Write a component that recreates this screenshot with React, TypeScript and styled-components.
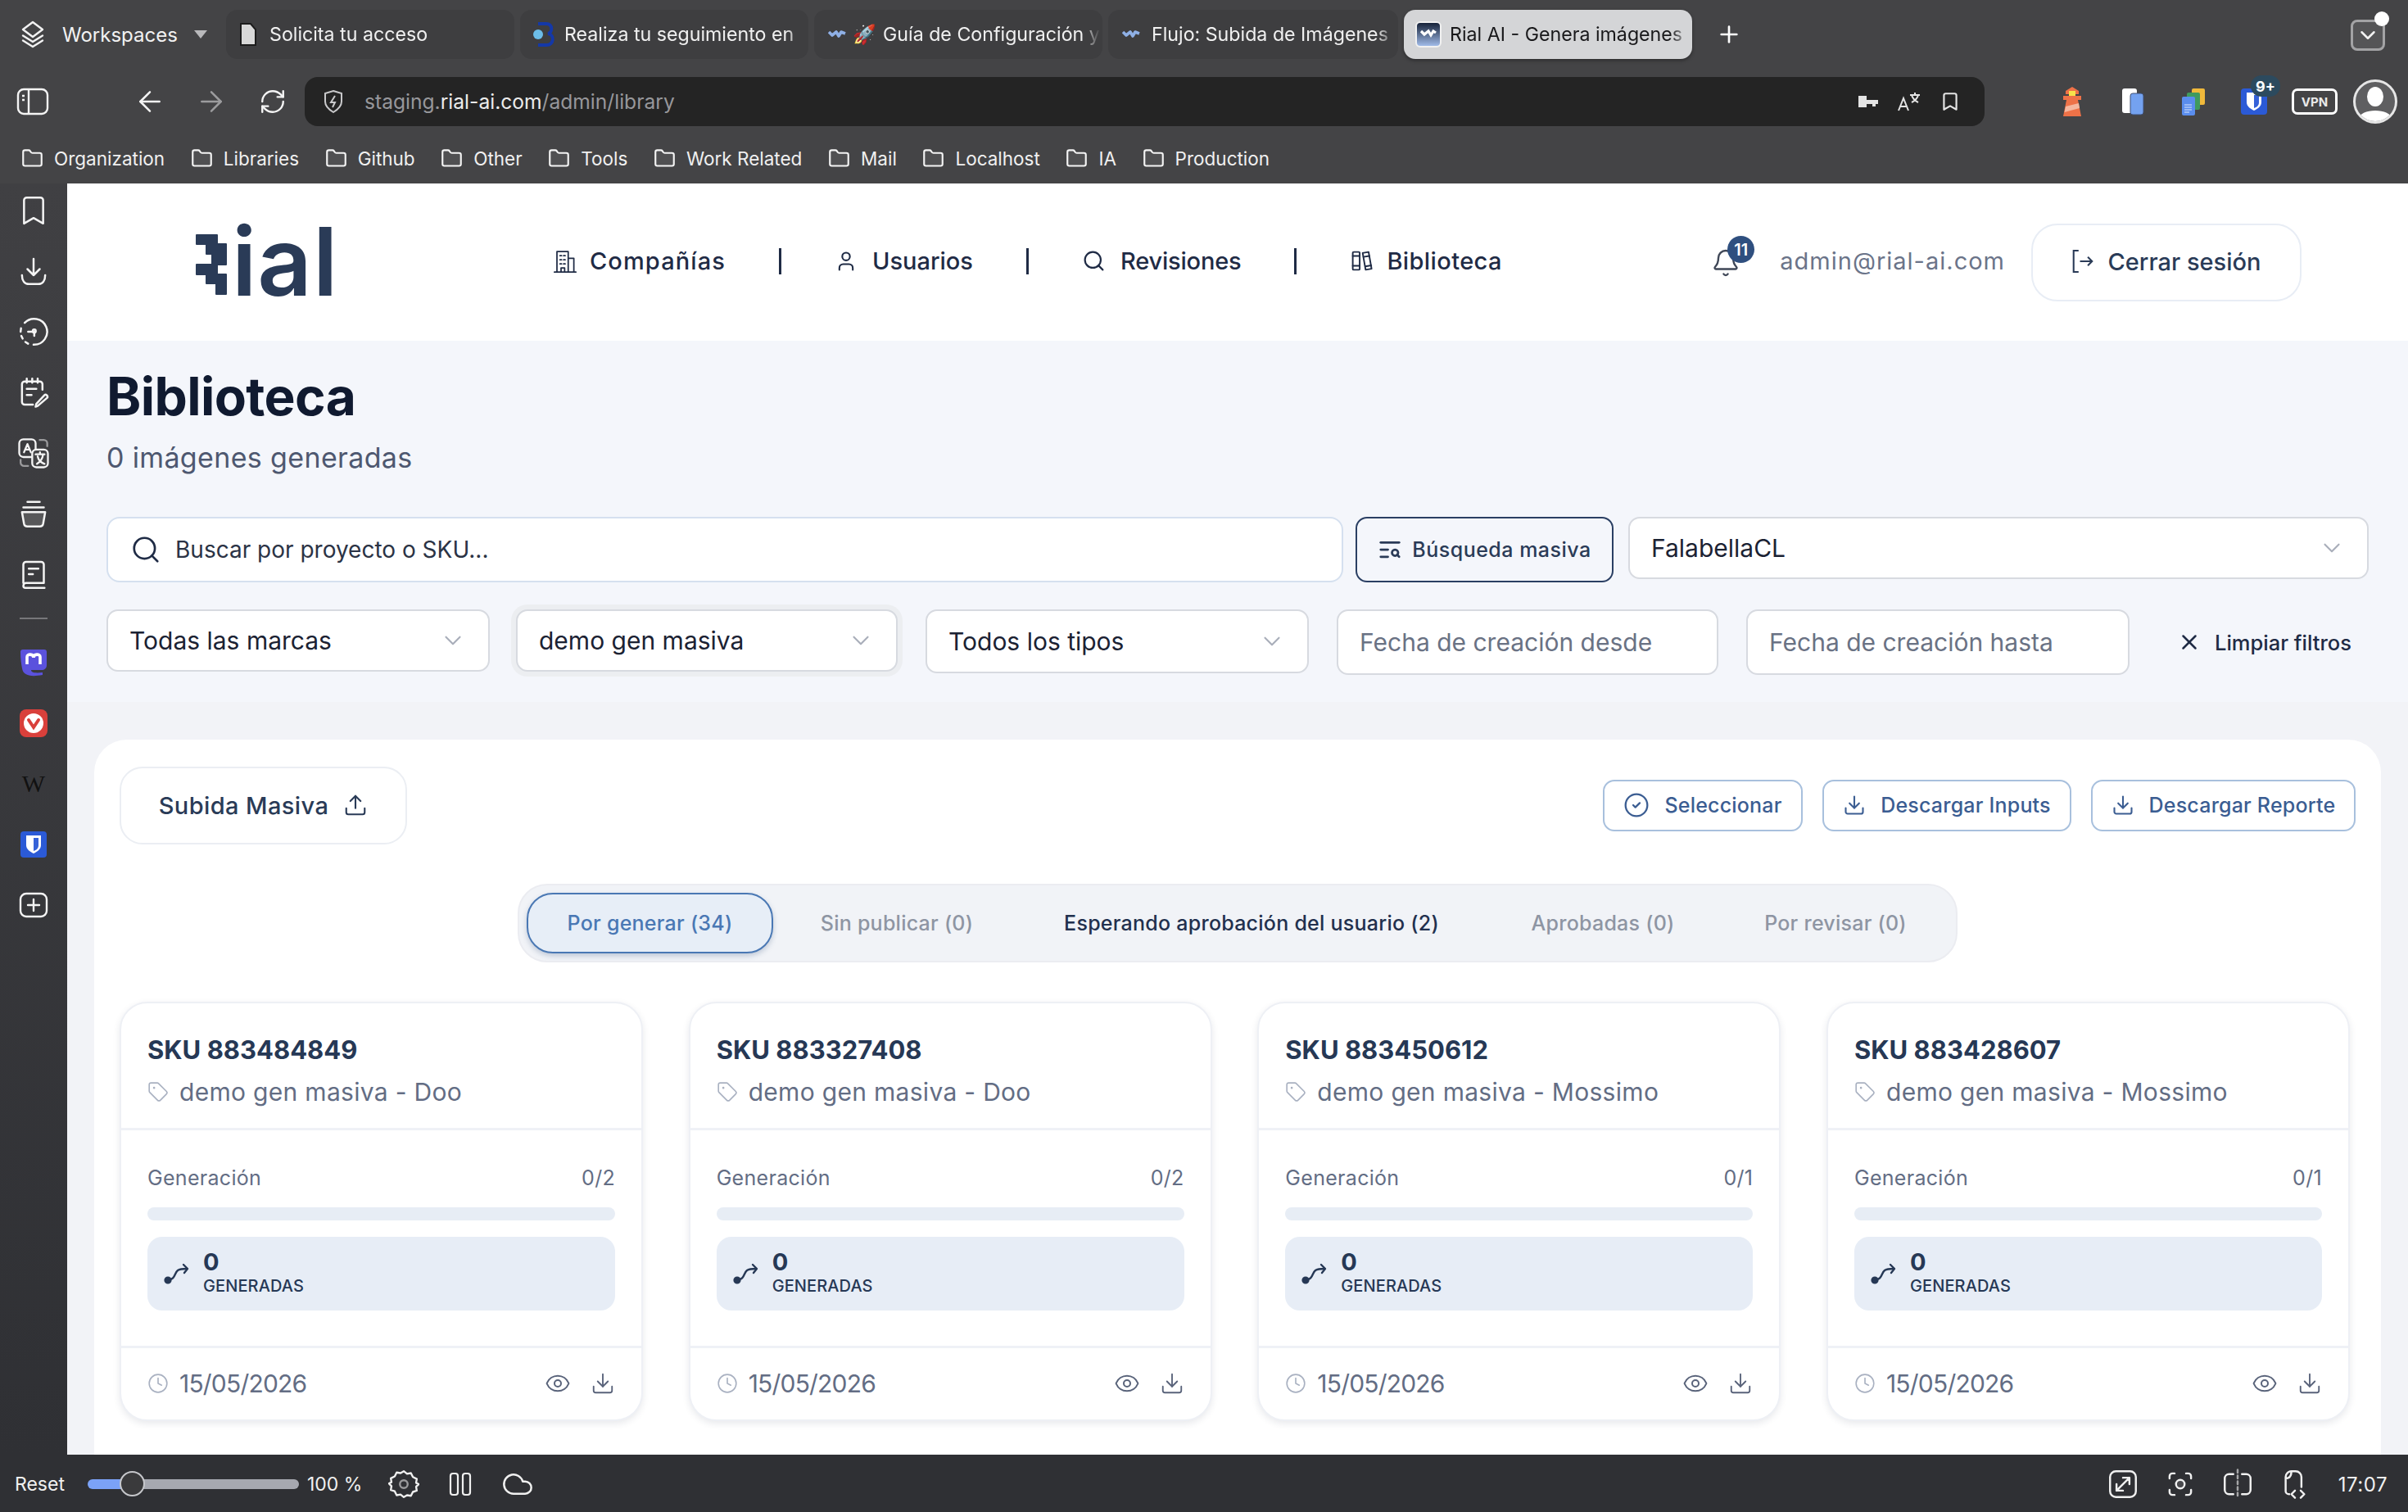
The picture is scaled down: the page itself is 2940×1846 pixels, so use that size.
import React from 'react';
import styled, { createGlobalStyle } from 'styled-components';
import {
  Bell,
  Bookmark,
  ChevronDown,
  CircleCheck,
  Clock,
  Download,
  Eye,
  Plus,
  RefreshCw,
  Search,
  Tag,
  TextSearch,
  Upload,
  User,
  X,
  ArrowLeft,
  ArrowRight,
  Cloud,
  Folder,
} from 'lucide-react';

const GlobalStyle = createGlobalStyle`
  html, body {
    margin: 0;
    padding: 0;
    width: 2940px;
    height: 1846px;
    overflow: hidden;
    background: #2f3034;
    font-family: Inter, "Liberation Sans", sans-serif;
  }
  * { box-sizing: border-box; }
`;

const Window = styled.div`
  width: 2940px;
  height: 1846px;
  display: grid;
  grid-template-rows: 224px 1fr 70px;
  overflow: hidden;
`;

/* browser chrome */
const Chrome = styled.div`
  background: #444446;
  color: #fff;
  display: flex;
  flex-direction: column;
`;

const TabRow = styled.div`
  height: 84px;
  padding: 12px 28px 12px 22px;
  display: flex;
  align-items: flex-start;
`;

const WorkspaceBtn = styled.div`
  width: 254px;
  height: 60px;
  display: flex;
  align-items: center;
  gap: 18px;
  font-size: 24px;
  color: #f2f2f2;
`;

const Caret = styled.span`
  width: 0;
  height: 0;
  margin-left: 2px;
  border-left: 8px solid transparent;
  border-right: 8px solid transparent;
  border-top: 10px solid #b9b9bb;
`;

const BrowserTab = styled.div<{ $active?: boolean; $width?: number; $pad?: number; $gap?: number }>`
  width: ${(p) => p.$width ?? 352}px;
  height: 60px;
  margin-right: 7px;
  border-radius: 14px;
  padding: 0 3px 0 ${(p) => p.$pad ?? 16}px;
  display: flex;
  align-items: center;
  gap: ${(p) => p.$gap ?? 10}px;
  font-size: 23.2px;
  white-space: nowrap;
  overflow: hidden;
  background: ${(p) => (p.$active ? '#d4d5d7' : '#3e3e40')};
  color: ${(p) => (p.$active ? '#18181a' : '#f0f0f0')};
  ${(p) => p.$active && 'box-shadow: 0 2px 4px rgba(0,0,0,.35);'}
`;

const TabLabel = styled.span`
  flex: 1;
  -webkit-mask-image: linear-gradient(90deg, #000 92%, transparent 100%);
  mask-image: linear-gradient(90deg, #000 92%, transparent 100%);
`;

const NewTab = styled.div`
  height: 60px;
  width: 60px;
  margin-left: 8px;
  display: flex;
  align-items: center;
  justify-content: center;
`;

const InboxBtn = styled.div`
  margin-left: auto;
  position: relative;
  width: 42px;
  height: 38px;
  margin-top: 12px;
  border: 3px solid #a3a3a5;
  border-radius: 8px;
  background: #555557;
  display: flex;
  align-items: center;
  justify-content: center;
`;

const InboxDot = styled.span`
  position: absolute;
  top: -13px;
  right: -8px;
  width: 18px;
  height: 18px;
  border-radius: 50%;
  background: #fff;
`;

const AddressRow = styled.div`
  height: 76px;
  margin-top: 2px;
  padding: 0 13px 0 20px;
  display: flex;
  align-items: center;
`;

const RoundIcon = styled.div<{ $w?: number; $dim?: boolean }>`
  width: ${(p) => p.$w ?? 40}px;
  height: 40px;
  display: flex;
  align-items: center;
  justify-content: center;
  flex-shrink: 0;
  color: ${(p) => (p.$dim ? '#9c9c9e' : '#f4f4f4')};
`;

const NavGroup = styled.div`
  margin-left: 103px;
  display: flex;
  gap: 35px;
  margin-right: 19px;
`;

const AddressBar = styled.div`
  width: 2051px;
  height: 60px;
  border-radius: 16px;
  background: #242424;
  padding: 0 29px 0 22px;
  display: flex;
  align-items: center;
  gap: 25px;
  font-size: 24.6px;
  color: #97979b;
`;

const Url = styled.span`
  flex: 1;
  b {
    font-weight: 400;
    color: #ececec;
  }
`;

const AddressTools = styled.div`
  display: flex;
  align-items: center;
  gap: 22px;
  color: #e4e4e4;
`;

const Extensions = styled.div`
  margin-left: auto;
  display: flex;
  align-items: center;
  gap: 38px;
  position: relative;
`;

const ExtBadge = styled.span`
  position: absolute;
  top: -14px;
  right: -14px;
  height: 26px;
  min-width: 36px;
  padding: 0 5px;
  border-radius: 13px;
  background: #2c4a5e;
  color: #fff;
  font-size: 18px;
  font-weight: 700;
  display: flex;
  align-items: center;
  justify-content: center;
`;

const ExtSlot = styled.div`
  position: relative;
  width: 36px;
  height: 36px;
  display: flex;
  align-items: center;
  justify-content: center;
`;

const VpnTag = styled.span`
  width: 56px;
  height: 32px;
  margin-left: -10px;
  border: 3px solid #fff;
  border-radius: 7px;
  font-size: 15px;
  font-weight: 700;
  color: #e9e9e9;
  display: flex;
  align-items: center;
  justify-content: center;
`;

const Avatar = styled.div`
  width: 54px;
  height: 54px;
  margin-left: -19px;
  border-radius: 50%;
  border: 3px solid #e6e6e6;
  overflow: hidden;
  background: #5f5f61;
`;

const BookmarkRow = styled.div`
  height: 62px;
  padding: 0 0 0 26px;
  display: flex;
  align-items: center;
  gap: 31.6px;
  font-size: 22.5px;
  color: #f0f0f0;
`;

const BookmarkItem = styled.div`
  display: flex;
  align-items: center;
  gap: 13px;
`;

/* middle */
const Middle = styled.div`
  display: flex;
  min-height: 0;
`;

const Sidebar = styled.aside`
  width: 82px;
  flex-shrink: 0;
  padding-top: 13px;
  background: linear-gradient(#404043, #2f3034);
  display: flex;
  flex-direction: column;
  align-items: center;
  gap: 34px;
  color: #f4f4f4;
`;

const SideIcon = styled.div`
  width: 40px;
  height: 40px;
  display: flex;
  align-items: center;
  justify-content: center;
`;

const SideRule = styled.div`
  width: 34px;
  height: 2px;
  margin: -1px 0;
  background: #77777a;
`;

const WikiMark = styled.span`
  font-family: "Liberation Serif", serif;
  font-size: 30px;
  color: #111;
`;

const Page = styled.main`
  flex: 1;
  min-width: 0;
  display: flex;
  flex-direction: column;
  background: #f2f3f7;
  color: #1f2d47;
  overflow: hidden;
`;

const Header = styled.header`
  height: 192px;
  flex-shrink: 0;
  padding: 0 130px 0 156px;
  background: #fff;
  display: flex;
  align-items: center;
`;

const Logo = styled.div`
  width: 170px;
  height: 100px;
  margin-right: 267px;
  display: flex;
  align-items: center;
  gap: 5px;
  color: #2a3b57;

  svg {
    flex-shrink: 0;
    margin-top: 6px;
  }
`;

const LogoText = styled.span`
  font-size: 116px;
  font-weight: 600;
  line-height: 100px;
  letter-spacing: 1px;
  margin-top: -2px;
`;

const Nav = styled.nav`
  display: flex;
  align-items: center;
  gap: 65px;
  margin-top: -3px;
`;

const NavItem = styled.div<{ $gap: number; $track?: number }>`
  display: flex;
  align-items: center;
  gap: ${(p) => p.$gap}px;
  font-size: 29px;
  font-weight: 500;
  color: #1f2b45;
  letter-spacing: ${(p) => p.$track ?? 0}px;
`;

const NavSep = styled.span`
  width: 3px;
  height: 32px;
  background: #1f2b45;
`;

const HeaderRight = styled.div`
  margin-left: auto;
  display: flex;
  align-items: center;
`;

const BellWrap = styled.div`
  position: relative;
  width: 36px;
  height: 38px;
  margin-top: 4px;
  margin-right: 48px;
  color: #3f4757;
`;

const BellBadge = styled.span`
  position: absolute;
  top: -15px;
  left: 20px;
  width: 33px;
  height: 33px;
  border-radius: 50%;
  background: #2f4f7f;
  color: #fff;
  font-size: 20px;
  font-weight: 600;
  display: flex;
  align-items: center;
  justify-content: center;
`;

const Email = styled.span`
  font-size: 29px;
  letter-spacing: 1px;
  color: #6b7489;
  margin-right: 32px;
  margin-top: -3px;
`;

const LogoutBtn = styled.div`
  width: 330px;
  height: 95px;
  padding-bottom: 2px;
  border: 2px solid #e8edf5;
  border-radius: 32px;
  display: flex;
  align-items: center;
  justify-content: center;
  gap: 18px;
  font-size: 29px;
  font-weight: 500;
  color: #2a3b57;
`;

/* filters */
const TopArea = styled.section`
  height: 441px;
  flex-shrink: 0;
  padding: 32px 48px 0;
  background: #f4f6fb;
`;

const Title = styled.h1`
  margin: 0;
  font-size: 64px;
  line-height: 72px;
  font-weight: 700;
  color: #101a30;
  letter-spacing: -0.6px;
`;

const Subtitle = styled.p`
  margin: 17px 0 0;
  font-size: 34px;
  line-height: 44px;
  letter-spacing: 0.35px;
  color: #4e5870;
`;

const SearchRow = styled.div`
  margin-top: 50px;
  display: flex;
  align-items: flex-start;
`;

const SearchBox = styled.div`
  width: 1510px;
  height: 80px;
  margin-right: 15px;
  border: 2px solid #d5e0ef;
  border-radius: 16px;
  background: #fff;
  padding: 0 27px;
  display: flex;
  align-items: center;
  gap: 17px;
  font-size: 28px;
  color: #2b3345;
`;

const BulkBtn = styled.div`
  width: 315px;
  height: 80px;
  margin-right: 18px;
  border: 2px solid #2a3f63;
  border-radius: 14px;
  display: flex;
  align-items: center;
  justify-content: center;
  gap: 12px;
  font-size: 25px;
  font-weight: 500;
  letter-spacing: 0.5px;
  color: #2a3b57;
`;

const Field = styled.div<{ $width: number; $height?: number }>`
  width: ${(p) => p.$width}px;
  height: ${(p) => p.$height ?? 76}px;
  border: 2px solid #d7dae0;
  border-radius: 14px;
  background: #fff;
  padding: 0 26px;
  display: flex;
  align-items: center;
  justify-content: space-between;
  flex-shrink: 0;
  font-size: 30px;
  color: #1b2233;
`;

const FieldHint = styled.span`
  color: #6a7284;
`;

const FilterRow = styled.div`
  margin-top: 33px;
  display: flex;
  align-items: flex-start;
  gap: 34px;
`;

const Halo = styled.div`
  margin: -6px -6px -6px -8px;
  padding: 6px;
  border-radius: 20px;
  background: #eceef1;
`;

const ClearBtn = styled.div`
  height: 80px;
  margin-left: 24px;
  display: flex;
  align-items: center;
  gap: 16px;
  font-size: 25.5px;
  font-weight: 500;
  color: #1f2b45;
`;

/* panel */
const Panel = styled.section`
  flex: 1;
  margin: 46px 33px 0;
  padding: 32px 31px 0;
  border-radius: 40px 40px 0 0;
  background: #fff;
`;

const PanelTop = styled.div`
  height: 96px;
  display: flex;
  align-items: center;
  justify-content: space-between;
`;

const BulkUpload = styled.div`
  width: 351px;
  height: 95px;
  border: 2px solid #ebeef3;
  border-radius: 28px;
  display: flex;
  align-items: center;
  justify-content: center;
  gap: 18px;
  font-size: 29px;
  font-weight: 500;
  letter-spacing: 0.4px;
  color: #2a3b57;
`;

const Actions = styled.div`
  display: flex;
  gap: 24px;
`;

const ActionBtn = styled.div<{ $width: number }>`
  width: ${(p) => p.$width}px;
  height: 63px;
  border: 2px solid #a8c0dd;
  border-radius: 14px;
  display: flex;
  align-items: center;
  justify-content: center;
  gap: 18px;
  font-size: 25px;
  font-weight: 500;
  letter-spacing: 0.2px;
  color: #3b5d92;
`;

const TabsWrap = styled.div`
  margin-top: 48px;
  display: flex;
  justify-content: center;
`;

const Tabs = styled.div`
  width: 1758px;
  height: 96px;
  padding: 10px 9px;
  border: 2px solid #ebecf1;
  border-radius: 36px;
  background: #f1f3f7;
  display: flex;
  align-items: center;
`;

const StatusTab = styled.div<{ $state: 'active' | 'strong' | 'muted'; $width: number }>`
  width: ${(p) => p.$width}px;
  height: 74px;
  flex-shrink: 0;
  border-radius: 32px;
  display: flex;
  align-items: center;
  justify-content: center;
  font-size: 25px;
  font-weight: 500;
  letter-spacing: 0.25px;
  white-space: nowrap;
  color: ${(p) => (p.$state === 'active' ? '#4a78b4' : p.$state === 'strong' ? '#22304e' : '#8e95a3')};
  ${(p) =>
    p.$state === 'active' &&
    'background:#e7eef7;border:2px solid #4a78b4;box-shadow:0 3px 6px rgba(40,70,120,.25);'}
`;

const CardGrid = styled.div`
  margin-top: 48px;
  padding-right: 7px;
  display: grid;
  grid-template-columns: repeat(4, 639px);
  justify-content: space-between;
`;

const Card = styled.article`
  height: 512px;
  border: 2px solid #eef0f5;
  border-radius: 34px;
  background: #fff;
  box-shadow: 0 3px 8px rgba(30, 40, 70, 0.1);
  display: flex;
  flex-direction: column;
`;

const CardHead = styled.div`
  height: 155px;
  padding: 37px 32px 0;
  border-bottom: 3px solid #eff1f6;
`;

const Sku = styled.div`
  font-size: 31px;
  line-height: 40px;
  font-weight: 700;
  color: #263855;
`;

const MetaLine = styled.div`
  margin-top: 11px;
  display: flex;
  align-items: center;
  gap: 13px;
  font-size: 30px;
  line-height: 40px;
  letter-spacing: 0.3px;
  color: #636d84;
`;

const DateLine = styled(MetaLine)`
  margin-top: 0;
  letter-spacing: -0.8px;
`;

const CardBody = styled.div`
  height: 266px;
  padding: 40px 32px 0;
  border-bottom: 3px solid #eff1f6;
`;

const ProgressHead = styled.div`
  display: flex;
  justify-content: space-between;
  font-size: 25px;
  line-height: 36px;
  letter-spacing: 0.3px;
  color: #636d84;
`;

const ProgressTrack = styled.div`
  height: 16px;
  margin-top: 18px;
  border-radius: 8px;
  background: #e7edf5;
`;

const StatBox = styled.div`
  height: 90px;
  margin-top: 20px;
  border-radius: 18px;
  background: #e7edf6;
  padding-left: 20px;
  display: flex;
  align-items: center;
  gap: 16px;
  color: #263855;
`;

const StatText = styled.div`
  display: flex;
  flex-direction: column;
  margin-top: -2px;
`;

const StatValue = styled.span`
  font-size: 29px;
  line-height: 32px;
  font-weight: 700;
`;

const StatLabel = styled.span`
  font-size: 20px;
  line-height: 26px;
  font-weight: 500;
  letter-spacing: 0.1px;
`;

const CardFoot = styled.div`
  flex: 1;
  padding: 0 32px 2px;
  display: flex;
  align-items: center;
  justify-content: space-between;
`;

const FootIcons = styled.div`
  display: flex;
  align-items: center;
  gap: 24px;
  color: #59637a;
`;

/* status bar */
const StatusBar = styled.footer`
  background: #2f3034;
  color: #f0f0f0;
  padding: 2px 25px 0 18px;
  display: flex;
  align-items: center;
  font-size: 23px;
`;

const Slider = styled.div`
  position: relative;
  width: 258px;
  height: 12px;
  margin: 0 10px 0 28px;
  border-radius: 6px;
  background: linear-gradient(90deg, #7ba2f7 16%, #a6a8b0 16%);
`;

const SliderThumb = styled.span`
  position: absolute;
  top: -10px;
  left: 39px;
  width: 31px;
  height: 31px;
  border-radius: 50%;
  background: #3a3a3c;
  border: 2px solid #c6c7cb;
`;

const BarIcons = styled.div`
  margin-left: 32px;
  display: flex;
  gap: 36px;
  align-items: center;
`;

const BarRight = styled.div`
  margin-left: auto;
  display: flex;
  align-items: center;
  gap: 28px;
`;

const Clockface = styled.span`
  margin-left: 4px;
  font-size: 24px;
  letter-spacing: 0.5px;
`;

/* drawings */
const RialMark = () => (
  <svg width="40" height="74" viewBox="0 0 38 74" fill="#2a3b57" stroke="#2a3b57" strokeWidth="2" strokeLinejoin="round">
    <path d="M1 1H26V12H37V37H26V49H37V73H25V60H13V49H1V37H20V24H13V12H1Z" />
  </svg>
);

const RialWave = ({ color = '#8fb0e6', size = 22 }: { color?: string; size?: number }) => (
  <svg width={size} height={size} viewBox="0 0 22 22" fill="none" stroke={color} strokeWidth="3.6" strokeLinejoin="round">
    <path d="M1 8l4 4 5-4 3 5 3-5 5 2" />
  </svg>
);

const Stroke = ({ size = 34, sw = 1.6, children }: { size?: number; sw?: number; children: React.ReactNode }) => (
  <svg width={size} height={size} viewBox="0 0 24 24" fill="none" stroke="currentColor" strokeWidth={sw} strokeLinecap="round" strokeLinejoin="round">
    {children}
  </svg>
);

const BuildingIcon = () => (
  <Stroke size={30} sw={1.4}>
    <path d="M1.500 22.500h21" />
    <path d="M4 22.500V2.500h11v20M15 9h5.500v13.500" />
    <path d="M7 6.500h1.500M10.500 6.500H12M7 10.500h1.500M10.500 10.500H12M7 14.500h1.500M10.500 14.500H12M8 22.500v-4h3.500v4" />
  </Stroke>
);

const LogoutIcon = () => (
  <svg width="26" height="32" viewBox="0 0 30 34" fill="none" stroke="#2a3b57" strokeWidth="2.4">
    <path d="M9 2H2v30h7" />
    <path d="M11 17h17M22 11l6 6-6 6" />
  </svg>
);

const BooksIcon = () => (
  <Stroke size={29}>
    <rect x="3" y="3" width="7" height="18" rx="1" />
    <path d="M3 7h7M3 17h7" />
    <path d="M13 4l6-1 3 17-6 1z" />
    <path d="M13.800 8l6-1M15.700 17.600l6-1" />
  </Stroke>
);

const RouteIcon = () => (
  <svg width="32" height="32" viewBox="0 0 32 32" fill="none" stroke="#263855" strokeWidth="2.4" strokeLinecap="round" strokeLinejoin="round">
    <circle cx="5" cy="24" r="3.4" fill="#263855" />
    <path d="M8 23c6-1 5-8 9-11 3-2 6-2 11-2" />
    <path d="M24 5l5 5-4 5" />
  </svg>
);

const Lighthouse = () => (
  <svg width="26" height="36" viewBox="0 0 26 36">
    <path d="M13 0l8 5v4H5V5z" fill="#ee7248" />
    <rect x="9" y="5" width="8" height="6" fill="#f7e24a" />
    <rect x="2" y="11" width="22" height="5" fill="#ee7248" />
    <path d="M6 16h14l4 20H2z" fill="#ee7248" />
    <path d="M5 24l16-4 1 6L3.600 31z" fill="#f5b79f" />
  </svg>
);

const Pages = () => (
  <svg width="28" height="34" viewBox="0 0 28 34">
    <rect x="1" y="1" width="18" height="30" rx="3" fill="#fff" />
    <rect x="11" y="7" width="16" height="26" rx="3" fill="#74a2f0" stroke="#3f4f73" />
  </svg>
);

const DocStack = () => (
  <svg width="30" height="34" viewBox="0 0 30 34">
    <rect x="13" y="1" width="16" height="20" rx="2" fill="#f0b93b" />
    <rect x="7" y="6" width="16" height="21" rx="2" fill="#3f9a5e" />
    <rect x="1" y="11" width="16" height="23" rx="2" fill="#5a8dee" />
    <path d="M4 21h9M4 24h9M4 27h9M4 30h6" stroke="#dce7fb" strokeWidth="1.2" />
  </svg>
);

const Shield = ({ w = 32, bg = '#2b5ad6' }: { w?: number; bg?: string }) => (
  <svg width={w} height={w} viewBox="0 0 32 32">
    <rect width="32" height="32" rx="4" fill={bg} />
    <path d="M7 5h18v12c0 5-5 8-9 10-4-2-9-5-9-10z" fill="#fff" />
    <path d="M16 8h6v9c0 4-3 6-6 7z" fill={bg} opacity="0.95" />
  </svg>
);

const sideIcons: React.ReactNode[] = [
  <Stroke size={40} sw={1.5}><path d="M7 2.500h10a2 2 0 0 1 2 2v17l-7-4-7 4v-17a2 2 0 0 1 2-2z" /></Stroke>,
  <Stroke size={40} sw={1.5}><path d="M12 3v12M7.500 10.500L12 15l4.500-4.500M3.500 15c0 4 2 6.500 5 6.500h7c3 0 5-2.500 5-6.500" /></Stroke>,
  <Stroke size={40} sw={1.5}>
    <path d="M5.500 5.500A9.500 9.500 0 1 1 12 21.500" />
    <path d="M2.800 9.500l-.3 2.500M3 15l1 2M6 19.500l2 1.300" />
    <path d="M8 12h4M12.500 12v3" /><circle cx="12.500" cy="11.500" r="1.100" />
  </Stroke>,
  <Stroke size={40} sw={1.5}>
    <path d="M18.500 10V6a2 2 0 0 0-2-2h-11a2 2 0 0 0-2 2v13a2 2 0 0 0 2 2h6" />
    <path d="M7 2v3M11 2v3M15 2v3M7 9.500h7M7 14h3.500" />
    <path d="M15 22l-1.500.5.500-2 6-6.500c1-1 3 1 2 2z" />
  </Stroke>,
  <Stroke size={42} sw={1.4}>
    <rect x="1.500" y="2" width="12" height="13" rx="3" />
    <path d="M5 11.500l2.500-6 2.500 6M6 9.500h3" />
    <path d="M16.500 2.500h3a2.500 2.500 0 0 1 2.500 2.500v2M2.500 17v2a2.500 2.500 0 0 0 2.500 2.500h3" stroke="#9a9a9c" />
    <rect x="11" y="9.500" width="11.500" height="13" rx="3" fill="#444446" />
    <path d="M13.500 13h6.500M16.700 11.500V13M14.500 20c2.500-1.500 4-3.500 4.500-7M15 14.500c.5 2.500 2.500 4.500 5 5.500" />
  </Stroke>,
  <Stroke size={40} sw={1.5}>
    <path d="M3.500 11h17l-1.500 8.500a2.500 2.500 0 0 1-2.500 2h-9a2.500 2.500 0 0 1-2.500-2z" fill="#58585a" />
    <path d="M4.500 7.500h15M7.500 3.500h9" />
  </Stroke>,
  <Stroke size={40} sw={1.5}>
    <path d="M4.500 18.500V5a2 2 0 0 1 2-2h11a2 2 0 0 1 2 2v13.500H6.500a2 2 0 0 0-2 2 1.500 1.500 0 0 0 1.500 1.500h14" />
    <path d="M8.500 8h7M8.500 12h3" />
  </Stroke>,
];

const SKUS = [
  { sku: 'SKU 883484849', brand: 'demo gen masiva - Doo', count: '0/2' },
  { sku: 'SKU 883327408', brand: 'demo gen masiva - Doo', count: '0/2' },
  { sku: 'SKU 883450612', brand: 'demo gen masiva - Mossimo', count: '0/1' },
  { sku: 'SKU 883428607', brand: 'demo gen masiva - Mossimo', count: '0/1' },
];

const BOOKMARKS = ['Organization', 'Libraries', 'Github', 'Other', 'Tools', 'Work Related', 'Mail', 'Localhost', 'IA', 'Production'];

const App: React.FC = () => {
  return (
    <Window>
      <GlobalStyle />
      <Chrome>
        <TabRow>
          <WorkspaceBtn>
            <Stroke size={36}>
              <path d="M12 2l8 6-8 6-8-6z" />
              <path d="M4 13l8 5 8-5M4 17l8 5 8-5" />
            </Stroke>
            Workspaces
            <Caret />
          </WorkspaceBtn>
          <BrowserTab $pad={17} $gap={16}>
            <svg width="20" height="28" viewBox="0 0 20 28">
              <path d="M1 1h12l6 7v19H1z" fill="#d8d8d8" stroke="#1c1c1c" strokeWidth="2" />
            </svg>
            <TabLabel>Solicita tu acceso</TabLabel>
          </BrowserTab>
          <BrowserTab $pad={16} $gap={10}>
            <svg width="28" height="30" viewBox="0 0 28 30">
              <path d="M6 2h10c8 0 8 11 2 12 8 1 8 14-2 14H6" fill="none" stroke="#1438a8" strokeWidth="4" />
              <circle cx="6" cy="15" r="6" fill="#6cbde8" />
            </svg>
            <TabLabel>Realiza tu seguimiento en</TabLabel>
          </BrowserTab>
          <BrowserTab $pad={17} $gap={8}>
            <RialWave />
            <span>🚀</span>
            <TabLabel>Guía de Configuración y</TabLabel>
          </BrowserTab>
          <BrowserTab $width={354} $pad={17} $gap={14}>
            <RialWave />
            <TabLabel>Flujo: Subida de Imágenes</TabLabel>
          </BrowserTab>
          <BrowserTab $active $pad={14} $gap={10}>
            <svg width="32" height="32" viewBox="0 0 32 32">
              <defs>
                <linearGradient id="rialFav" x1="0" y1="0" x2="0" y2="1">
                  <stop offset="0" stopColor="#111d33" />
                  <stop offset="1" stopColor="#a5c0ee" />
                </linearGradient>
              </defs>
              <rect x="1" y="1" width="30" height="30" rx="5" fill="url(#rialFav)" stroke="#f1f1f1" strokeWidth="2" />
              <path d="M7 12l4 4 5-4 3 5 3-5 3 2" fill="none" stroke="#fff" strokeWidth="3.200" />
            </svg>
            <TabLabel>Rial AI - Genera imágenes</TabLabel>
          </BrowserTab>
          <NewTab>
            <Plus size={32} strokeWidth={2} />
          </NewTab>
          <InboxBtn>
            <InboxDot />
            <ChevronDown size={30} strokeWidth={2} color="#f2f2f2" />
          </InboxBtn>
        </TabRow>
        <AddressRow>
          <RoundIcon>
            <svg width="40" height="34" viewBox="0 0 40 34" fill="none" stroke="#f4f4f4" strokeWidth="2.400">
              <rect x="2" y="2" width="36" height="30" rx="7" />
              <path d="M15 2v30" />
              <path d="M7 10h3M7 15h3" />
            </svg>
          </RoundIcon>
          <NavGroup>
            <RoundIcon>
              <ArrowLeft size={40} strokeWidth={1.5} />
            </RoundIcon>
            <RoundIcon $dim>
              <ArrowRight size={40} strokeWidth={1.5} />
            </RoundIcon>
            <RoundIcon>
              <RefreshCw size={34} strokeWidth={1.7} />
            </RoundIcon>
          </NavGroup>
          <AddressBar>
            <svg width="26" height="30" viewBox="0 0 26 30" fill="none" stroke="#c9c9cb" strokeWidth="2">
              <path d="M13 2l10 3v10c0 6-5 10-10 13C8 25 3 21 3 15V5z" />
              <path d="M15 8l-5 8h5l-3 6" />
            </svg>
            <Url>
              staging.<b>rial-ai.com</b>/admin/library
            </Url>
            <AddressTools>
              <svg width="26" height="18" viewBox="0 0 26 18" fill="#e4e4e4">
                <path d="M1 2h10v5h14v5h-3v3h-4v-3h-7v4H1z" />
              </svg>
              <svg width="30" height="26" viewBox="0 0 30 26" fill="none" stroke="#e4e4e4" strokeWidth="2">
                <path d="M2 24L8 9l6 15M4.500 19h7M16 5h12M22 2v3M18 14c4-2 7-5 8-9M18 5c1 4 4 7 8 9" />
              </svg>
              <Bookmark size={26} strokeWidth={2} />
            </AddressTools>
          </AddressBar>
          <Extensions>
            <ExtSlot><Lighthouse /></ExtSlot>
            <ExtSlot><Pages /></ExtSlot>
            <ExtSlot><DocStack /></ExtSlot>
            <ExtSlot>
              <Shield />
              <ExtBadge>9+</ExtBadge>
            </ExtSlot>
            <VpnTag>VPN</VpnTag>
            <Avatar>
              <svg width="48" height="48" viewBox="0 0 48 48" fill="#fff">
                <ellipse cx="24" cy="18" rx="10" ry="12" />
                <path d="M2 48c2-10 12-13 22-13s20 3 22 13z" />
              </svg>
            </Avatar>
          </Extensions>
        </AddressRow>
        <BookmarkRow>
          {BOOKMARKS.map((name) => (
            <BookmarkItem key={name}>
              <Folder size={27} strokeWidth={1.9} color="#f4f4f4" fill="#505052" />
              {name}
            </BookmarkItem>
          ))}
        </BookmarkRow>
      </Chrome>

      <Middle>
        <Sidebar>
          {sideIcons.map((icon, i) => (
            <SideIcon key={i}>{icon}</SideIcon>
          ))}
          <SideRule />
          <SideIcon>
            <svg width="34" height="36" viewBox="0 0 34 36">
              <path d="M4 2h26a3 3 0 0 1 3 3v16c0 4-3 6-6 6H14c0 3 4 4 14 3v3c-16 3-24 0-25-8-1-5-2-12-2-20a3 3 0 0 1 3-3z" fill="#5b52dd" />
              <path d="M9 20V11c0-4 8-4 8 1 0-5 8-5 8-1v9" fill="none" stroke="#fff" strokeWidth="3.600" />
            </svg>
          </SideIcon>
          <SideIcon>
            <svg width="34" height="34" viewBox="0 0 34 34">
              <rect width="34" height="34" rx="8" fill="#d9403b" />
              <circle cx="17" cy="17" r="12" fill="#fff" />
              <path d="M11 13l6 9 6-9" fill="none" stroke="#d9403b" strokeWidth="4" strokeLinecap="round" />
            </svg>
          </SideIcon>
          <SideIcon>
            <WikiMark>W</WikiMark>
          </SideIcon>
          <SideIcon>
            <Shield bg="#2b5ad6" />
          </SideIcon>
          <SideIcon>
            <svg width="36" height="32" viewBox="0 0 36 32" fill="none" stroke="#f4f4f4" strokeWidth="2.400" strokeLinecap="round">
              <rect x="2" y="2" width="32" height="28" rx="7" />
              <path d="M18 9v14M11 16h14" />
            </svg>
          </SideIcon>
        </Sidebar>

        <Page>
          <Header>
            <Logo>
              <RialMark />
              <LogoText>ial</LogoText>
            </Logo>
            <Nav>
              <NavItem $gap={15} $track={1.1}>
                <BuildingIcon />
                Compañías
              </NavItem>
              <NavSep />
              <NavItem $gap={18}>
                <User size={28} strokeWidth={1.8} />
                Usuarios
              </NavItem>
              <NavSep />
              <NavItem $gap={18} $track={-0.2}>
                <Search size={29} strokeWidth={1.8} />
                Revisiones
              </NavItem>
              <NavSep />
              <NavItem $gap={16} $track={0.4}>
                <BooksIcon />
                Biblioteca
              </NavItem>
            </Nav>
            <HeaderRight>
              <BellWrap>
                <Bell size={36} strokeWidth={1.6} />
                <BellBadge>11</BellBadge>
              </BellWrap>
              <Email>admin@rial-ai.com</Email>
              <LogoutBtn>
                <LogoutIcon />
                Cerrar sesión
              </LogoutBtn>
            </HeaderRight>
          </Header>

          <TopArea>
            <Title>Biblioteca</Title>
            <Subtitle>0 imágenes generadas</Subtitle>
            <SearchRow>
              <SearchBox>
                <Search size={38} strokeWidth={1.7} color="#1f2b45" />
                Buscar por proyecto o SKU...
              </SearchBox>
              <BulkBtn>
                <TextSearch size={30} strokeWidth={2.2} />
                Búsqueda masiva
              </BulkBtn>
              <Field $width={904}>
                FalabellaCL
                <ChevronDown size={34} strokeWidth={1.5} color="#a9aeba" />
              </Field>
            </SearchRow>
            <FilterRow>
              <Field $width={468}>
                Todas las marcas
                <ChevronDown size={34} strokeWidth={1.5} color="#a9aeba" />
              </Field>
              <Halo>
                <Field $width={466}>
                  demo gen masiva
                  <ChevronDown size={34} strokeWidth={1.5} color="#a9aeba" />
                </Field>
              </Halo>
              <Field $width={468} $height={78}>
                Todos los tipos
                <ChevronDown size={34} strokeWidth={1.5} color="#a9aeba" />
              </Field>
              <Field $width={466} $height={80}>
                <FieldHint>Fecha de creación desde</FieldHint>
              </Field>
              <Field $width={468} $height={80}>
                <FieldHint>Fecha de creación hasta</FieldHint>
              </Field>
              <ClearBtn>
                <X size={30} strokeWidth={2} />
                Limpiar filtros
              </ClearBtn>
            </FilterRow>
          </TopArea>

          <Panel>
            <PanelTop>
              <BulkUpload>
                Subida Masiva
                <Upload size={30} strokeWidth={1.7} />
              </BulkUpload>
              <Actions>
                <ActionBtn $width={244}>
                  <CircleCheck size={32} strokeWidth={1.7} />
                  Seleccionar
                </ActionBtn>
                <ActionBtn $width={304}>
                  <Download size={28} strokeWidth={1.8} />
                  Descargar Inputs
                </ActionBtn>
                <ActionBtn $width={323}>
                  <Download size={28} strokeWidth={1.8} />
                  Descargar Reporte
                </ActionBtn>
              </Actions>
            </PanelTop>
            <TabsWrap>
              <Tabs>
                <StatusTab $state="active" $width={301}>Por generar (34)</StatusTab>
                <StatusTab $state="muted" $width={302}>Sin publicar (0)</StatusTab>
                <StatusTab $state="strong" $width={564}>Esperando aprobación del usuario (2)</StatusTab>
                <StatusTab $state="muted" $width={294}>Aprobadas (0)</StatusTab>
                <StatusTab $state="muted" $width={274}>Por revisar (0)</StatusTab>
              </Tabs>
            </TabsWrap>
            <CardGrid>
              {SKUS.map((item) => (
                <Card key={item.sku}>
                  <CardHead>
                    <Sku>{item.sku}</Sku>
                    <MetaLine>
                      <Tag size={26} strokeWidth={1.5} color="#a9b1c1" />
                      {item.brand}
                    </MetaLine>
                  </CardHead>
                  <CardBody>
                    <ProgressHead>
                      <span>Generación</span>
                      <span>{item.count}</span>
                    </ProgressHead>
                    <ProgressTrack />
                    <StatBox>
                      <RouteIcon />
                      <StatText>
                        <StatValue>0</StatValue>
                        <StatLabel>GENERADAS</StatLabel>
                      </StatText>
                    </StatBox>
                  </CardBody>
                  <CardFoot>
                    <DateLine>
                      <Clock size={26} strokeWidth={1.5} color="#a9b1c1" />
                      15/05/2026
                    </DateLine>
                    <FootIcons>
                      <Eye size={32} strokeWidth={1.5} />
                      <Download size={30} strokeWidth={1.5} />
                    </FootIcons>
                  </CardFoot>
                </Card>
              ))}
            </CardGrid>
          </Panel>
        </Page>
      </Middle>

      <StatusBar>
        Reset
        <Slider>
          <SliderThumb />
        </Slider>
        100 %
        <BarIcons>
          <Stroke size={38} sw={1.5}>
            <path d="M12 2l2.500 2 3-.5 1.500 3 3 1.500-.5 3 2 1-2 2 .5 3-3 1-1.500 3-3-.5L12 22l-2.500-2-3 .5-1.500-3-3-1 .5-3-2-2 2-1-.5-3 3-1.500 1.500-3 3 .5z" />
            <circle cx="12" cy="12" r="3" stroke="#9a9a9c" />
          </Stroke>
          <svg width="28" height="30" viewBox="0 0 28 30" fill="none" stroke="#f0f0f0" strokeWidth="2.200">
            <rect x="2" y="2" width="9" height="26" rx="3" />
            <rect x="17" y="2" width="9" height="26" rx="3" />
          </svg>
          <Cloud size={40} strokeWidth={1.5} />
        </BarIcons>
        <BarRight>
          <Stroke size={42} sw={1.4}>
            <rect x="3" y="3" width="18" height="18" rx="4" />
            <path d="M7.500 16.500l9-9M12 7.500h4.500V12M7.500 12v4.500H12" />
          </Stroke>
          <Stroke size={42} sw={1.4}>
            <path d="M4.500 8V6.500a2 2 0 0 1 2-2H8M16 4.500h1.500a2 2 0 0 1 2 2V8M19.500 16v1.500a2 2 0 0 1-2 2H16M8 19.500H6.500a2 2 0 0 1-2-2V16" />
            <circle cx="12" cy="12" r="3" fill="#4a4a4e" />
          </Stroke>
          <Stroke size={42} sw={1.4}>
            <path d="M9 5H6a3 3 0 0 0-3 3v8a3 3 0 0 0 3 3h3M15 5h3a3 3 0 0 1 3 3v8a3 3 0 0 1-3 3h-3" />
            <path d="M12 2v20" strokeDasharray="2 2" stroke="#a5a5a7" />
          </Stroke>
          <Stroke size={42} sw={1.4}>
            <path d="M5.500 17V7a4 4 0 0 1 4-4h3a4 4 0 0 1 4 4v7M5.500 8c3 0 4-2 4-5M5.500 17c0 1 1 2 2.500 2" />
            <path d="M12 16.500l-2.500 2.500 2.500 2.500M16 16.500l2.500 2.500-2.500 2.500" />
          </Stroke>
          <Clockface>17:07</Clockface>
        </BarRight>
      </StatusBar>
    </Window>
  );
};

export default App;
